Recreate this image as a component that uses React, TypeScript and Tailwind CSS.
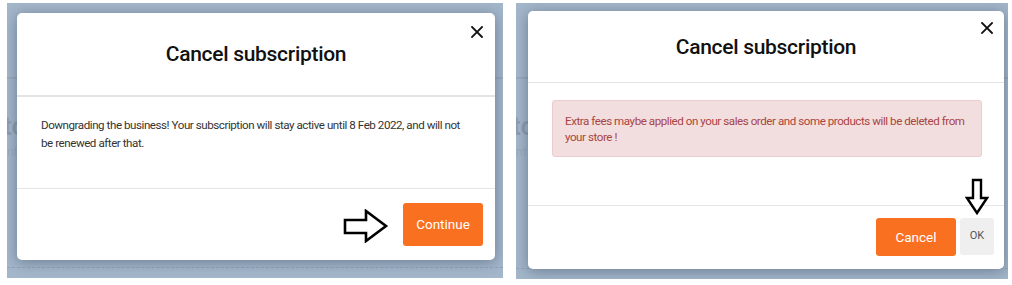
import React from "react";

const font = { fontFamily: "Roboto, 'Noto Sans', sans-serif" };

function XIcon() {
  return (
    <svg width="12" height="12" viewBox="0 0 12 12" className="block">
      <path d="M1 1 L11 11 M11 1 L1 11" stroke="#111" strokeWidth="1.8" strokeLinecap="square" />
    </svg>
  );
}

function RightArrow() {
  return (
    <svg width="46" height="34" viewBox="0 0 46 34" className="block">
      <path
        d="M2 11 L23 11 L23 2 L43 17 L23 32 L23 24 L2 24 Z"
        fill="white"
        stroke="black"
        strokeWidth="2.6"
        strokeLinejoin="miter"
      />
    </svg>
  );
}

function DownArrow() {
  return (
    <svg width="24" height="38" viewBox="0 0 24 38" className="block">
      <path
        d="M8 2 L16 2 L16 20 L22 20 L12 35 L2 20 L8 20 Z"
        fill="white"
        stroke="black"
        strokeWidth="2.4"
        strokeLinejoin="miter"
      />
    </svg>
  );
}

function Backdrop({ children }: { children: React.ReactNode }) {
  return (
    <div className="relative h-full w-full overflow-hidden bg-[#a3b6ca]">
      <div className="absolute left-0 top-[74px] h-[2px] w-full bg-[#9aa9b9]" />
      <div className="absolute left-[-4px] top-[104px] text-[26px] font-semibold text-[#8e9db0]" style={font}>
        to
      </div>
      <div className="absolute left-0 top-[140px] text-[12px] text-[#9aabbf]" style={font}>
        nt
      </div>
      <div className="absolute bottom-[10px] left-0 w-full border-t border-dashed border-[#93a3b6]" />
      {children}
    </div>
  );
}

export default function App() {
  return (
    <div className="flex h-[285px] w-[1012px] bg-white pl-[7px] pt-[3px]" style={font}>
      <div className="h-[275px] w-[496px]">
        <Backdrop>
          <div className="absolute left-[10px] top-[10px] flex h-[247px] w-[478px] flex-col rounded-[5px] bg-white shadow-[0_2px_14px_rgba(40,55,75,0.45)]">
            <div className="relative flex h-[84px] items-center justify-center border-b-2 border-[#e4e4e4] pt-[2px]">
              <h2 className="text-[21px] font-medium tracking-[-0.3px] text-[#111]">Cancel subscription</h2>
              <button className="absolute right-[12px] top-[13px]">
                <XIcon />
              </button>
            </div>
            <div className="h-[92px] border-b border-[#e6e6e6] px-[24px] pt-[19px]">
              <p className="text-[11.6px] leading-[18px] tracking-[-0.45px] text-[#333]">
                Downgrading the business! Your subscription will stay active until 8 Feb 2022, and will not be renewed after that.
              </p>
            </div>
            <div className="flex flex-1 items-start justify-end gap-[14px] pr-[12px] pt-[14px]">
              <div className="mt-[6px]">
                <RightArrow />
              </div>
              <button className="flex h-[43px] w-[80px] items-center justify-center rounded-[3px] bg-[#fa7021] text-[13.5px] text-white">
                Continue
              </button>
            </div>
          </div>
        </Backdrop>
      </div>
      <div className="ml-[13px] h-[276px] w-[492px]">
        <Backdrop>
          <div className="absolute left-[12px] top-[8px] flex h-[258px] w-[476px] flex-col rounded-[5px] bg-white shadow-[0_2px_14px_rgba(40,55,75,0.45)]">
            <div className="relative flex h-[72px] items-center justify-center border-b border-[#e4e4e4] pt-[2px]">
              <h2 className="text-[21px] font-medium tracking-[-0.3px] text-[#111]">Cancel subscription</h2>
              <button className="absolute right-[11px] top-[11px]">
                <XIcon />
              </button>
            </div>
            <div className="h-[123px] border-b border-[#e6e6e6] pl-[24px] pr-[22px] pt-[17px]">
              <div className="h-[57px] rounded-[3px] border border-[#ebccd1] bg-[#f2dede] px-[12px] pt-[12px]">
                <p className="text-[11.6px] leading-[16px] tracking-[-0.45px] text-[#a94442]">
                  Extra fees maybe applied on your sales order and some products will be deleted from your store !
                </p>
              </div>
            </div>
            <div className="flex flex-1 items-start justify-end gap-[4px] pr-[10px] pt-[12px]">
              <button className="flex h-[38px] w-[80px] items-center justify-center rounded-[3px] bg-[#fa7021] text-[13.5px] text-white">
                Cancel
              </button>
              <div className="relative">
                <div className="absolute left-[5px] top-[-40px]">
                  <DownArrow />
                </div>
                <button className="flex h-[37px] w-[34px] items-center justify-center rounded-[3px] bg-[#efefef] text-[11px] text-[#555]">
                  OK
                </button>
              </div>
            </div>
          </div>
        </Backdrop>
      </div>
    </div>
  );
}
